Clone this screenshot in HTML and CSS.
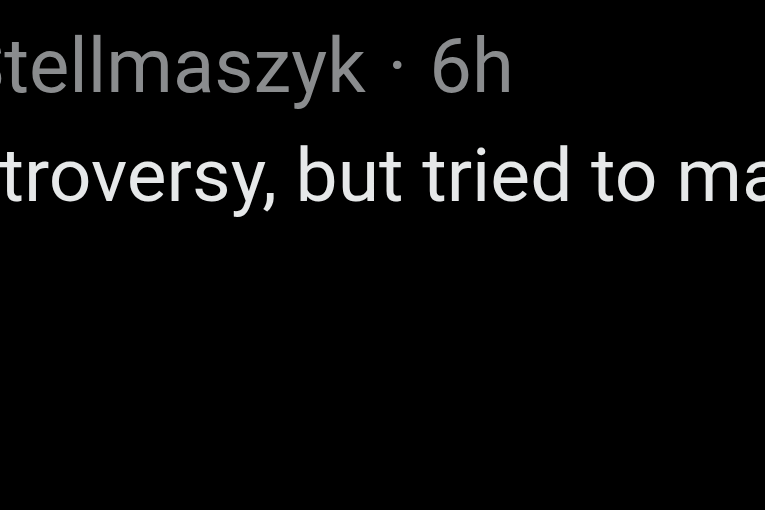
FILE: index.html
```html
<!DOCTYPE html>
<html lang="en">
<head>
    <meta charset="UTF-8">
    <meta name="viewport" content="width=device-width, initial-scale=1.0">
    <title>Tweet</title>
    <link rel="stylesheet" href="styles.css">
</head>
<body>
    <div class="tweet">
        <div class="meta">
            <span class="name">Stellmaszyk</span>
            <span class="dot">·</span>
            <span class="time">6h</span>
        </div>
        <p class="text">controversy, but tried to make</p>
    </div>
</body>
</html>
```
FILE: styles.css
```css
body {
    margin: 0;
    background: #000;
    font-family: Roboto, "Noto Sans", sans-serif;
    overflow: hidden;
}
.tweet {
    padding-top: 21px;
    height: 489px;
    overflow: hidden;
    filter: blur(0.7px);
}
.meta {
    font-size: 76px;
    line-height: 90px;
    color: #8a8c8e;
    white-space: nowrap;
    margin-left: -41px;
}
.dot {
    margin: 0 3px;
}
.text {
    margin: 21px 0 0 -124px;
    font-size: 75px;
    line-height: 86px;
    color: #e6e8e9;
    white-space: nowrap;
}
```
